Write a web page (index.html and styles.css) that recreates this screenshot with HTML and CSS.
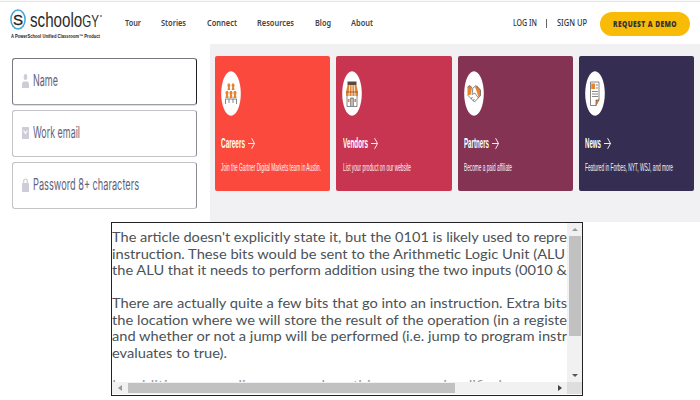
FILE: index.html
```html
<!DOCTYPE html>
<html lang="en">
<head>
<meta charset="utf-8">
<title>Schoology</title>
<link rel="stylesheet" href="styles.css">
</head>
<body>
<header class="header">
  <div class="brand">
    <div class="brand-row">
      <svg class="mark" viewBox="0 0 16 21"><ellipse cx="8" cy="10.5" rx="7.1" ry="9.5"/><text x="8" y="16">S</text></svg>
      <div class="wordmark fit"><span>schoolo<small>GY</small></span></div>
      <i class="reg"></i>
    </div>
    <div class="tagline fit"><span>A PowerSchool Unified Classroom™ Product</span></div>
  </div>
  <nav class="nav">
    <a class="fit w16"><span>Tour</span></a>
    <a class="fit w25"><span>Stories</span></a>
    <a class="fit w30"><span>Connect</span></a>
    <a class="fit w37"><span>Resources</span></a>
    <a class="fit w16"><span>Blog</span></a>
    <a class="fit w22"><span>About</span></a>
  </nav>
  <div class="account">
    <a class="fit w24"><span>LOG IN</span></a>
    <i class="bar"></i>
    <a class="fit w30"><span>SIGN UP</span></a>
  </div>
  <div class="demo"><b class="fit w64"><span>REQUEST A DEMO</span></b></div>
</header>
<main class="main">
  <form class="form">
    <div class="field active">
      <svg class="ficon" viewBox="0 0 7 14"><ellipse cx="3.5" cy="3" rx="1.8" ry="2.9"/><path d="M0 14V10.5Q0 7.5 2 7.5H5Q7 7.5 7 10.5V14Z"/></svg>
      <div class="fit w25"><span>Name</span></div>
    </div>
    <div class="field">
      <svg class="ficon" viewBox="0 0 7 14"><rect y="1" width="7" height="12" rx=".8"/><path class="cut" d="M1.6 4.5 3.5 7.5 5.4 4.5"/></svg>
      <div class="fit w47"><span>Work email</span></div>
    </div>
    <div class="field">
      <svg class="ficon" viewBox="0 0 7 14"><rect y="5" width="7" height="9" rx=".8"/><path class="shackle" d="M1.7 6V3.2Q1.7 1 3.5 1T5.3 3.2V6"/></svg>
      <div class="fit w106"><span>Password 8+ characters</span></div>
    </div>
  </form>
  <section class="cards">
    <article class="card red">
      <svg class="cicon" viewBox="0 0 20 45"><ellipse class="disc" cx="10" cy="22.5" rx="9.8" ry="22.3"/>
        <g class="orange"><path d="M6.8 12.5h2l.6 2-.6 2 .6 2.5H6.4l.6-2.5-.6-2zM11 12.5h2l.6 2-.6 2 .6 2.5h-3l.6-2.5-.6-2zM5 20h2l.6 2-.6 2 .6 3H4.4l.6-3-.6-2zM9 20h2l.6 2-.6 2 .6 3H8.4l.6-3-.6-2zM13 20h2l.6 2-.6 2 .6 3h-3.2l.6-3-.6-2z"/></g>
        <path class="line" d="M4.5 33v-5H15.5v5M8 28v4M12 28v4"/></svg>
      <h2><b class="fit w24"><span>Careers</span></b><svg class="arrow" viewBox="0 0 7 13"><path d="M0 6.5H6.5M3.6 1.2 6.5 6.5 3.6 11.8"/></svg></h2>
      <p class="fit w100"><span>Join the Gartner Digital Markets team in Austin.</span></p>
    </article>
    <article class="card rose">
      <svg class="cicon" viewBox="0 0 20 45"><ellipse class="disc" cx="10" cy="22.5" rx="9.8" ry="22.3"/>
        <path class="shop" d="M5.5 10.5H14.5V14H5.5Z"/><path class="orange" d="M5.5 14H14.5L16 21V25H4V21Z"/><path class="stripe" d="M7.8 14 7 25M10 14V25M12.2 14 13 25"/><path class="line" d="M4 21H16M5 25V35.5H15V25M8.6 35V27H11.4V35M10 27V35"/><path class="orange" d="M5.8 28h1.7v3H5.8zM12.4 28h1.7v3h-1.7z"/></svg>
      <h2><b class="fit w25"><span>Vendors</span></b><svg class="arrow" viewBox="0 0 7 13"><path d="M0 6.5H6.5M3.6 1.2 6.5 6.5 3.6 11.8"/></svg></h2>
      <p class="fit w68"><span>List your product on our website</span></p>
    </article>
    <article class="card plum">
      <svg class="cicon" viewBox="0 0 20 45"><ellipse class="disc" cx="10" cy="22.5" rx="9.8" ry="22.3"/>
        <path class="orange" d="M3.5 16 6 14.5 8 17 6.5 24H3.5ZM11 16 13 14.5 16.5 19V25L14.5 26 12.5 20Z"/><path class="line" d="M3.5 16 6 14.5 8.5 17.5 12 14.5 16.5 19V24.5L10.5 31 5 25.5 3.5 24M8.8 18 8 23.5 10.8 22 14.5 27M7 28 8.5 26M9 30 10.3 28"/></svg>
      <h2><b class="fit w25"><span>Partners</span></b><svg class="arrow" viewBox="0 0 7 13"><path d="M0 6.5H6.5M3.6 1.2 6.5 6.5 3.6 11.8"/></svg></h2>
      <p class="fit w48"><span>Become a paid affiliate</span></p>
    </article>
    <article class="card navy">
      <svg class="cicon" viewBox="0 0 20 45"><ellipse class="disc" cx="10" cy="22.5" rx="9.8" ry="22.3"/>
        <path class="line" d="M5.5 11H14V29L11 34.5H5.5Z"/><path class="orange" d="M6.2 12.5H10V18H6.2ZM11 34.5V29H14.3Z"/><path class="line" d="M10.8 14H13M10.8 17H13M7 20.5H13M7 23H13M7 25.5H13M11 34.5V29H14"/></svg>
      <h2><b class="fit w16"><span>News</span></b><svg class="arrow" viewBox="0 0 7 13"><path d="M0 6.5H6.5M3.6 1.2 6.5 6.5 3.6 11.8"/></svg></h2>
      <p class="fit w88"><span>Featured in Forbes, NYT, WSJ, and more</span></p>
    </article>
  </section>
</main>
<section class="viewer">
  <div class="text">
    <div class="fit l1"><span>The article doesn't explicitly state it, but the 0101 is likely used to repre</span></div>
    <div class="fit l2"><span>instruction. These bits would be sent to the Arithmetic Logic Unit (ALU</span></div>
    <div class="fit l3"><span>the ALU that it needs to perform addition using the two inputs (0010 &amp;</span></div>
    <div class="blank"></div>
    <div class="fit l4"><span>There are actually quite a few bits that go into an instruction. Extra bits</span></div>
    <div class="fit l5"><span>the location where we will store the result of the operation (in a registe</span></div>
    <div class="fit l6"><span>and whether or not a jump will be performed (i.e. jump to program instr</span></div>
    <div class="fit l7"><span>evaluates to true).</span></div>
    <div class="blank"></div>
    <div class="fit l8"><span>In addition, many diagrams such as this one are simplified</span></div>
  </div>
  <div class="vbar"><i class="up"></i><i class="vthumb"></i><i class="down"></i></div>
  <div class="hbar"><i class="left"></i><i class="hthumb"></i><i class="right"></i></div>
  <div class="corner"></div>
</section>
<script src="script.js"></script>
</body>
</html>
```
FILE: styles.css
```css
* { box-sizing: border-box; }
body { margin: 0; width: 700px; height: 400px; overflow: hidden; background: #fff; font-family: "Noto Sans", sans-serif; color: #333; }
h2, p { margin: 0; }
a, b, i { display: block; }
svg { display: block; flex: none; overflow: visible; }
/* Labels are condensed or stretched to the width of their box. */
.fit { flex: none; white-space: nowrap; }
.fit > span { display: inline-block; transform-origin: 0 50%; vertical-align: top; }
.w16 { width: 16px; } .w22 { width: 22px; } .w24 { width: 24px; } .w25 { width: 25px; }
.w30 { width: 30px; } .w37 { width: 37px; } .w47 { width: 47px; } .w48 { width: 48px; }
.w64 { width: 64px; } .w68 { width: 68px; } .w88 { width: 88px; } .w100 { width: 100px; } .w106 { width: 106px; }

.header { display: flex; height: 44px; padding-left: 10px; border-top: 1px solid #fafafa; box-shadow: inset 0 1px #e6e6e6; }
.brand { width: 114.5px; padding-top: 8px; }
.brand-row { display: flex; height: 23px; }
.mark { width: 16px; height: 21px; }
.mark ellipse { fill: none; stroke: #41a5d5; stroke-width: 1.5; }
.mark text { font: 15px "Liberation Sans", sans-serif; text-anchor: middle; fill: #222; stroke: #222; stroke-width: .3px; }
.wordmark { width: 69px; height: 22px; margin-left: 4px; font: 21px/22px "Liberation Sans", sans-serif; color: #2b2b2b; }
.wordmark small { font-size: 16px; }
.reg { width: 2px; height: 2px; margin: 6px 0 0 1px; background: #999; }
.tagline { width: 89px; margin: 1px 0 0 1px; font: bold 5px/6px "Liberation Sans", sans-serif; color: #222; }
.nav { display: flex; gap: 20.6px; width: 388px; padding-top: 15px; font-size: 9px; line-height: 14px; font-weight: 600; color: #444; }
.account { display: flex; width: 87.5px; padding-top: 15px; font-size: 9px; line-height: 14px; font-weight: 500; }
.bar { width: 1px; height: 9px; margin: 3px 10px 0 9px; background: #666; }
.demo { display: flex; justify-content: center; width: 90px; height: 24px; margin-top: 11px; border-radius: 12px; background: #f8bb08; font-size: 8px; line-height: 24px; font-weight: 700; letter-spacing: .5px; color: #333; }

.main { display: flex; height: 178px; background: #f1f1f4; }
.form { display: flex; flex-direction: column; gap: 5px; width: 210px; padding: 14px 13px 0 12px; background: #fff; }
.field { display: flex; align-items: center; height: 47px; padding: 0 0 2px 9px; border: 1px solid #c3c3c8; border-right-color: #8c8c94; border-radius: 3px; font: 15.5px/20px Inter, sans-serif; color: #62627c; }
.field.active { border-color: #77777f #22222c #9d9da8 #77777f; box-shadow: 0 1px #dddde2; }
.ficon { width: 7px; height: 14px; margin-right: 4px; fill: #cdccd8; }
.cut { fill: none; stroke: #fff; stroke-width: 1.1; }
.shackle { fill: none; stroke: #cdccd8; stroke-width: 1.2; }
.cards { display: grid; grid-template-columns: repeat(4, 115.3px); gap: 6.1px; padding: 12px 0 0 5px; }
.card { height: 135px; padding: 15px 0 0 6px; border-radius: 2px; color: #fff; overflow: hidden; }
.red { background: #fb493e; } .rose { background: #c83550; } .plum { background: #843353; } .navy { background: #352e52; }
.cicon { width: 20px; height: 45px; }
.disc { fill: #fff; }
.orange { fill: #e68432; }
.shop { fill: #5a4a45; }
.stripe { fill: none; stroke: #fff3e2; stroke-width: .9; }
.line { fill: none; stroke: #555; stroke-width: .7; }
.card h2 { display: flex; align-items: center; gap: 3px; height: 20px; margin: 17px 0 0 .3px; font: bold 14px/20px "Liberation Sans", sans-serif; }
.arrow { width: 7px; height: 13px; fill: none; stroke: #fff; stroke-width: .9; }
.card p { margin: 7px 0 0 .3px; font: 10.5px/15px "Liberation Sans", sans-serif; opacity: .95; }

.viewer { display: grid; grid-template: 159px 12px / 455px 15px; width: 472px; height: 174px; margin-left: 111px; border: 1px solid #222; background: #fff; }
.text { overflow: hidden; padding-top: 7px; font: 12.6px/16.5px Lato, sans-serif; color: #4c5257; }
.blank { height: 16.5px; }
.text .fit { height: 16.5px; }
.l1, .l4, .l5, .l6 { width: 455px; } .l2 { width: 453px; } .l3 { width: 455px; } .l7 { width: 115px; }
.text .l8 { width: 390px; margin-top: -.5px; color: #999; }
.vbar { display: flex; flex-direction: column; align-items: center; background: #f1f1f1; }
.vthumb { width: 12px; height: 100px; background: #c1c1c1; }
.up { margin: 5px 0 5px; border: 3px solid transparent; border-top: 0; border-bottom: 3px solid #999; }
.down { margin: auto 0 5px; border: 3px solid transparent; border-bottom: 0; border-top: 3px solid #555; }
.hbar { display: flex; align-items: center; background: #f1f1f1; }
.left { margin: 0 6px 0 6px; border: 3px solid transparent; border-left: 0; border-right: 4px solid #999; }
.hthumb { width: 327px; height: 10px; background: #c1c1c1; }
.right { margin: 0 5px 0 auto; border: 3px solid transparent; border-right: 0; border-left: 4px solid #444; }
.corner { background: #dedede; }
```
FILE: script.js
```js
// Scale each label horizontally so it fills its box.
document.querySelectorAll('.fit').forEach(function (box) {
  var label = box.firstElementChild;
  var target = parseFloat(getComputedStyle(box).width);
  label.style.transform = 'scaleX(' + target / label.getBoundingClientRect().width + ')';
});
```
